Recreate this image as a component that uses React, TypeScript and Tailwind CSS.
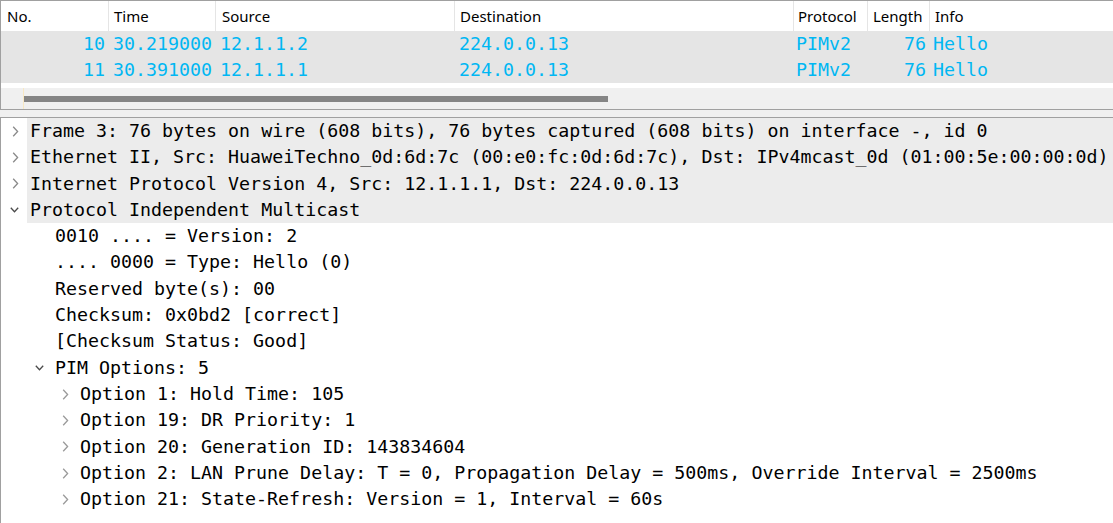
import React from "react";

const mono = { fontFamily: '"DejaVu Sans Mono", "Liberation Mono", monospace' };
const sans = { fontFamily: '"Noto Sans", "Open Sans", sans-serif' };

const cols = [
  { label: "No.", w: "w-[108px]", pl: "pl-[6px]" },
  { label: "Time", w: "w-[107px]", pl: "pl-[5px]" },
  { label: "Source", w: "w-[239px]", pl: "pl-[6px]" },
  { label: "Destination", w: "w-[339px]", pl: "pl-[5px]" },
  { label: "Protocol", w: "w-[74px]", pl: "pl-[4px]" },
  { label: "Length", w: "w-[62px]", pl: "pl-[5px]" },
  { label: "Info", w: "flex-1", pl: "pl-[5px]" },
];

const packets = [
  ["10", "30.219000", "12.1.1.2", "224.0.0.13", "PIMv2", "76", "Hello"],
  ["11", "30.391000", "12.1.1.1", "224.0.0.13", "PIMv2", "76", "Hello"],
];

type Row = { level: number; text: string; arrow?: "right" | "down"; hl?: boolean };

const rows: Row[] = [
  { level: 0, arrow: "right", hl: true, text: "Frame 3: 76 bytes on wire (608 bits), 76 bytes captured (608 bits) on interface -, id 0" },
  { level: 0, arrow: "right", hl: true, text: "Ethernet II, Src: HuaweiTechno_0d:6d:7c (00:e0:fc:0d:6d:7c), Dst: IPv4mcast_0d (01:00:5e:00:00:0d)" },
  { level: 0, arrow: "right", hl: true, text: "Internet Protocol Version 4, Src: 12.1.1.1, Dst: 224.0.0.13" },
  { level: 0, arrow: "down", hl: true, text: "Protocol Independent Multicast" },
  { level: 1, text: "0010 .... = Version: 2" },
  { level: 1, text: ".... 0000 = Type: Hello (0)" },
  { level: 1, text: "Reserved byte(s): 00" },
  { level: 1, text: "Checksum: 0x0bd2 [correct]" },
  { level: 1, text: "[Checksum Status: Good]" },
  { level: 1, arrow: "down", text: "PIM Options: 5" },
  { level: 2, arrow: "right", text: "Option 1: Hold Time: 105" },
  { level: 2, arrow: "right", text: "Option 19: DR Priority: 1" },
  { level: 2, arrow: "right", text: "Option 20: Generation ID: 143834604" },
  { level: 2, arrow: "right", text: "Option 2: LAN Prune Delay: T = 0, Propagation Delay = 500ms, Override Interval = 2500ms" },
  { level: 2, arrow: "right", text: "Option 21: State-Refresh: Version = 1, Interval = 60s" },
];

function Arrow({ dir, level }: { dir?: "right" | "down"; level: number }) {
  if (!dir) return null;
  if (dir === "right") {
    const color = level === 0 ? "#8a8a8a" : "#9a9a9a";
    return (
      <svg width="7" height="11" viewBox="0 0 7 11" className="ml-[11px]">
        <path d="M1.2 0.8 L5.6 5.5 L1.2 10.2" fill="none" stroke={color} strokeWidth="1.3" />
      </svg>
    );
  }
  return (
    <svg width="9" height="6" viewBox="0 0 9 6" className="ml-[9px]">
      <path d="M0.8 0.8 L4.5 4.8 L8.2 0.8" fill="none" stroke="#4a4a4a" strokeWidth="1.3" />
    </svg>
  );
}

export default function App() {
  return (
    <div className="w-[1113px] h-[523px] overflow-hidden bg-[#f0f0f0]">
      {/* Packet list */}
      <div className="border-l border-t border-b border-[#a0a0a0] bg-white">
        <div className="flex h-[30px] bg-white text-[15px] text-black" style={sans}>
          {cols.map((c, i) => (
            <div
              key={i}
              className={`${c.w} ${c.pl} flex items-center ${i < cols.length - 1 ? "border-r border-[#e5e5e5]" : ""}`}
            >
              {c.label}
            </div>
          ))}
        </div>
        {packets.map((p, r) => (
          <div key={r} className="flex h-[26px] items-center bg-[#e5e5e5] text-[18.3px] text-[#00b7f3] whitespace-pre" style={mono}>
            <div className="w-[108px] text-right pr-[4px]">{p[0]}</div>
            <div className="w-[107px] pl-[4px]">{p[1]}</div>
            <div className="w-[239px] pl-[4px]">{p[2]}</div>
            <div className="w-[339px] pl-[4px]">{p[3]}</div>
            <div className="w-[74px] pl-[2px]">{p[4]}</div>
            <div className="w-[62px] text-right pr-[4px]">{p[5]}</div>
            <div className="flex-1 pl-[3px]">{p[6]}</div>
          </div>
        ))}
        <div className="h-[5px] bg-white" />
        <div className="h-[21px] bg-[#f0f0f0] flex items-center">
          <div className="w-[22px] h-full" />
          <div className="w-px h-full bg-[#f8e8c4]" />
          <div className="w-[584px] h-[6px] bg-[#858585]" />
        </div>
      </div>
      {/* Splitter */}
      <div className="h-[7px] bg-[#f0f0f0]" />
      {/* Details */}
      <div className="h-[406px] border-l border-t border-[#a0a0a0] bg-white overflow-hidden" style={mono}>
        {rows.map((r, i) => (
          <div key={i} className="flex h-[26.3px] items-center" style={{ paddingLeft: r.level * 25 }}>
            <div className="w-[26px] shrink-0 flex items-center">
              <Arrow dir={r.arrow} level={r.level} />
            </div>
            <div
              className={`flex-1 h-full flex items-center pl-[3px] pb-[1px] text-[18.3px] text-black whitespace-pre ${r.hl ? "bg-[#ececec]" : ""}`}
            >
              {r.text}
            </div>
          </div>
        ))}
      </div>
    </div>
  );
}
